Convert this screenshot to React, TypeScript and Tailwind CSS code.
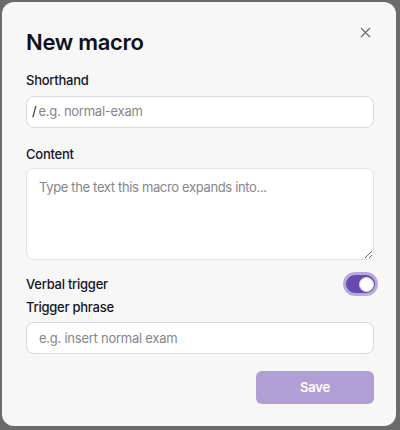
import { X } from "lucide-react"

const App = () => {
  return (
    <div className="w-[400px] h-[430px] bg-[#6b6b6b] p-[2px] pr-[4px] pb-[4px]" style={{ fontFamily: "Inter, 'Noto Sans', sans-serif" }}>
      <div className="relative w-full h-full bg-[#f7f7f7] rounded-xl pl-6 pr-[22px] pt-6 pb-[22px] flex flex-col tracking-[-0.25px]">
        <button className="absolute right-[22px] top-[22px] text-[#666]">
          <X size={17} strokeWidth={1.5} />
        </button>
        <h2 className="text-[22px] leading-8 font-semibold text-[#10101a] tracking-[-0.3px]">New macro</h2>

        <label className="mt-3 text-[13px] leading-5 font-medium text-[#15151f]">Shorthand</label>
        <div className="mt-1.5 h-8 rounded-lg border border-[#d6d9e1] bg-white flex items-center pl-[5px]">
          <span className="text-[13px] text-[#222]">/</span>
          <input
            className="flex-1 ml-[2px] bg-transparent outline-none text-[13px] tracking-[-0.25px] text-[#222] placeholder:text-[#85858c]"
            placeholder="e.g. normal-exam"
          />
        </div>

        <label className="mt-4 text-[13px] leading-5 font-medium text-[#15151f]">Content</label>
        <textarea
          className="mt-1 h-[92px] rounded-lg border border-[#e2e4ea] bg-white px-3 py-[9px] text-[13px] tracking-[-0.35px] outline-none resize-y placeholder:text-[#85858c]"
          placeholder="Type the text this macro expands into..."
        />

        <div className="mt-3.5 flex items-center justify-between">
          <span className="text-[13px] leading-5 font-medium text-[#15151f]">Verbal trigger</span>
          <button className="-mr-[1px] w-[29px] h-[18px] rounded-full bg-[#6749b0] ring-[3px] ring-[#b9a8df] flex items-center justify-end px-[1px]">
            <span className="w-[15px] h-[15px] rounded-full bg-white border border-[#ddd]" />
          </button>
        </div>

        <label className="mt-[3px] text-[13px] leading-5 font-medium text-[#15151f]">Trigger phrase</label>
        <input
          className="mt-[5px] h-8 rounded-lg border border-[#d6d9e1] bg-white px-3 text-[13px] tracking-[-0.25px] outline-none placeholder:text-[#85858c]"
          placeholder="e.g. insert normal exam"
        />

        <div className="mt-[17px] flex justify-end">
          <button className="w-[118px] h-[33px] rounded-md bg-[#b09fd4] text-white text-[13px] font-semibold">Save</button>
        </div>
      </div>
    </div>
  )
}

export default App
